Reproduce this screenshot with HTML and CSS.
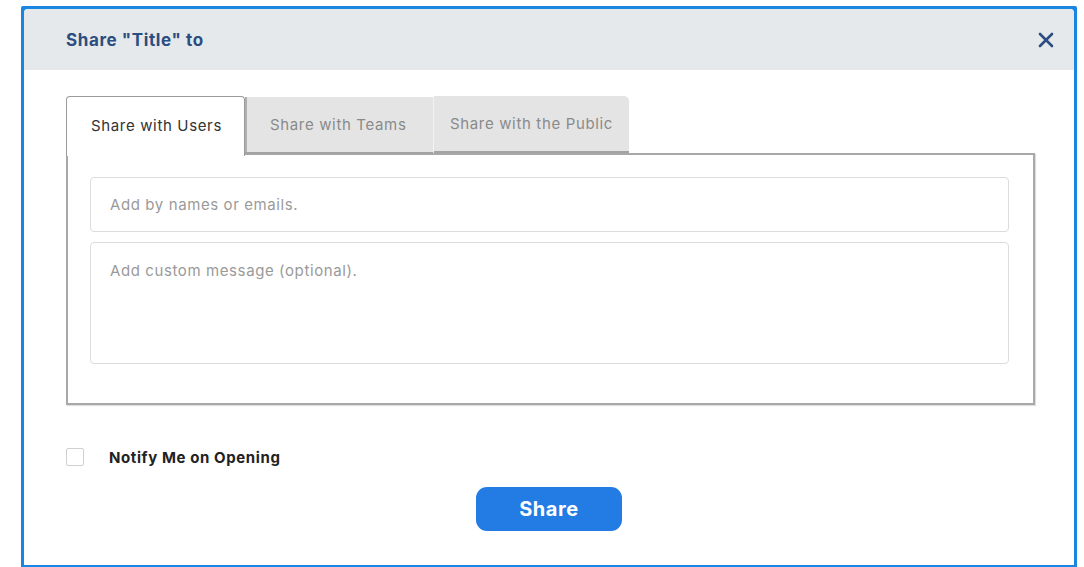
FILE: index.html
```html
<!DOCTYPE html>
<html lang="en">
<head>
<meta charset="utf-8">
<title>Share</title>
<link rel="stylesheet" href="styles.css">
</head>
<body>
<div class="frame">
  <div class="dialog">
    <header class="dialog-header">
      <h1 class="dialog-title">Share "Title" to</h1>
      <button class="close-btn" aria-label="Close">
        <svg width="16" height="16" viewBox="0 0 16 16"><path d="M2 2 L14 14 M14 2 L2 14" stroke="#2a4d82" stroke-width="2.6" stroke-linecap="round"/></svg>
      </button>
    </header>
    <div class="dialog-body">
      <div class="tabs">
        <div class="tab tab-active">Share with Users</div>
        <div class="tab tab-mid">Share with Teams</div>
        <div class="tab tab-last">Share with the Public</div>
      </div>
      <div class="tab-panel">
        <div class="field field-input">Add by names or emails.</div>
        <div class="field field-area">Add custom message (optional).</div>
      </div>
      <label class="notify">
        <span class="checkbox"></span>
        <span class="notify-text">Notify Me on Opening</span>
      </label>
      <div class="actions">
        <button class="share-btn">Share</button>
      </div>
    </div>
  </div>
</div>
</body>
</html>
```

FILE: styles.css
```css
* { box-sizing: border-box; }

html, body {
  margin: 0;
  padding: 0;
  background: #ffffff;
  font-family: Inter, "Noto Sans", "Liberation Sans", sans-serif;
}

.frame {
  margin: 6px 7px 0 21px;
  height: 561px;
  background: #1a86e2;
  padding: 3px 3px 2px 3px;
  border-radius: 2px 2px 0 0;
}

.dialog {
  height: 100%;
  background: #ffffff;
  border-radius: 4px 4px 0 0;
  display: flex;
  flex-direction: column;
  overflow: hidden;
}

.dialog-header {
  height: 61px;
  background: #e5e9ec;
  display: flex;
  align-items: center;
  justify-content: space-between;
  padding: 0 20px 0 42px;
  flex-shrink: 0;
}

.dialog-title {
  margin: 0;
  font-size: 17px;
  font-weight: 700;
  color: #2b4d80;
  letter-spacing: 0.6px;
}

.close-btn {
  border: none;
  background: none;
  padding: 0;
  width: 16px;
  height: 16px;
  display: flex;
  cursor: pointer;
}

.dialog-body {
  padding: 26px 39px 0 42px;
  display: flex;
  flex-direction: column;
}

.tabs {
  display: flex;
  height: 58px;
  position: relative;
  z-index: 1;
  margin-bottom: -1px;
}

.tab {
  display: flex;
  align-items: center;
  font-size: 15px;
  color: #8a8a8a;
  background: #e4e4e4;
  letter-spacing: 0.65px;
}

.tab-active {
  width: 179px;
  padding-left: 24px;
  color: #333333;
  background: #ffffff;
  border: 1.5px solid #9a9a9a;
  border-bottom: none;
  border-radius: 4px 4px 0 0;
  height: 60px;
  padding-bottom: 2px;
}

.tab-mid {
  width: 189px;
  padding-left: 25px;
  height: 57px;
  margin-top: 1px;
  border-bottom: 2px solid #a3a3a3;
  box-shadow: inset 2px 0 0 #b0b0b0;
  border-right: 1px solid #f2f2f2;
}

.tab-last {
  width: 195px;
  padding-left: 16px;
  height: 57px;
  border-radius: 0 5px 0 0;
  border-bottom: 2px solid #a3a3a3;
}

.tab-panel {
  border: 2px solid #a8a8a8;
  box-shadow: 1px 1px 1px rgba(0, 0, 0, 0.12);
  padding: 22px 24px 39px 22px;
  display: flex;
  flex-direction: column;
  gap: 10px;
}

.field {
  border: 1.5px solid #dcdcdc;
  border-radius: 4px;
  font-size: 15px;
  color: #9a9a9a;
  padding-left: 19px;
  letter-spacing: 0.6px;
}

.field-input {
  height: 55px;
  display: flex;
  align-items: center;
}

.field-area {
  height: 122px;
  padding-top: 18px;
}

.notify {
  display: flex;
  align-items: center;
  margin-top: 43px;
  height: 18px;
}

.checkbox {
  width: 18px;
  height: 18px;
  border: 1.5px solid #d0d0d0;
  border-radius: 2px;
  background: #fff;
}

.notify-text {
  margin-left: 25px;
  font-size: 15px;
  font-weight: 700;
  color: #222222;
  letter-spacing: 0.6px;
}

.actions {
  display: flex;
  justify-content: center;
  margin-top: 21px;
  padding-right: 3px;
}

.share-btn {
  width: 146px;
  height: 44px;
  border: none;
  border-radius: 11px;
  background: #237ce3;
  color: #ffffff;
  font-family: inherit;
  font-size: 20px;
  font-weight: 700;
  letter-spacing: 0.6px;
  cursor: pointer;
}
```
